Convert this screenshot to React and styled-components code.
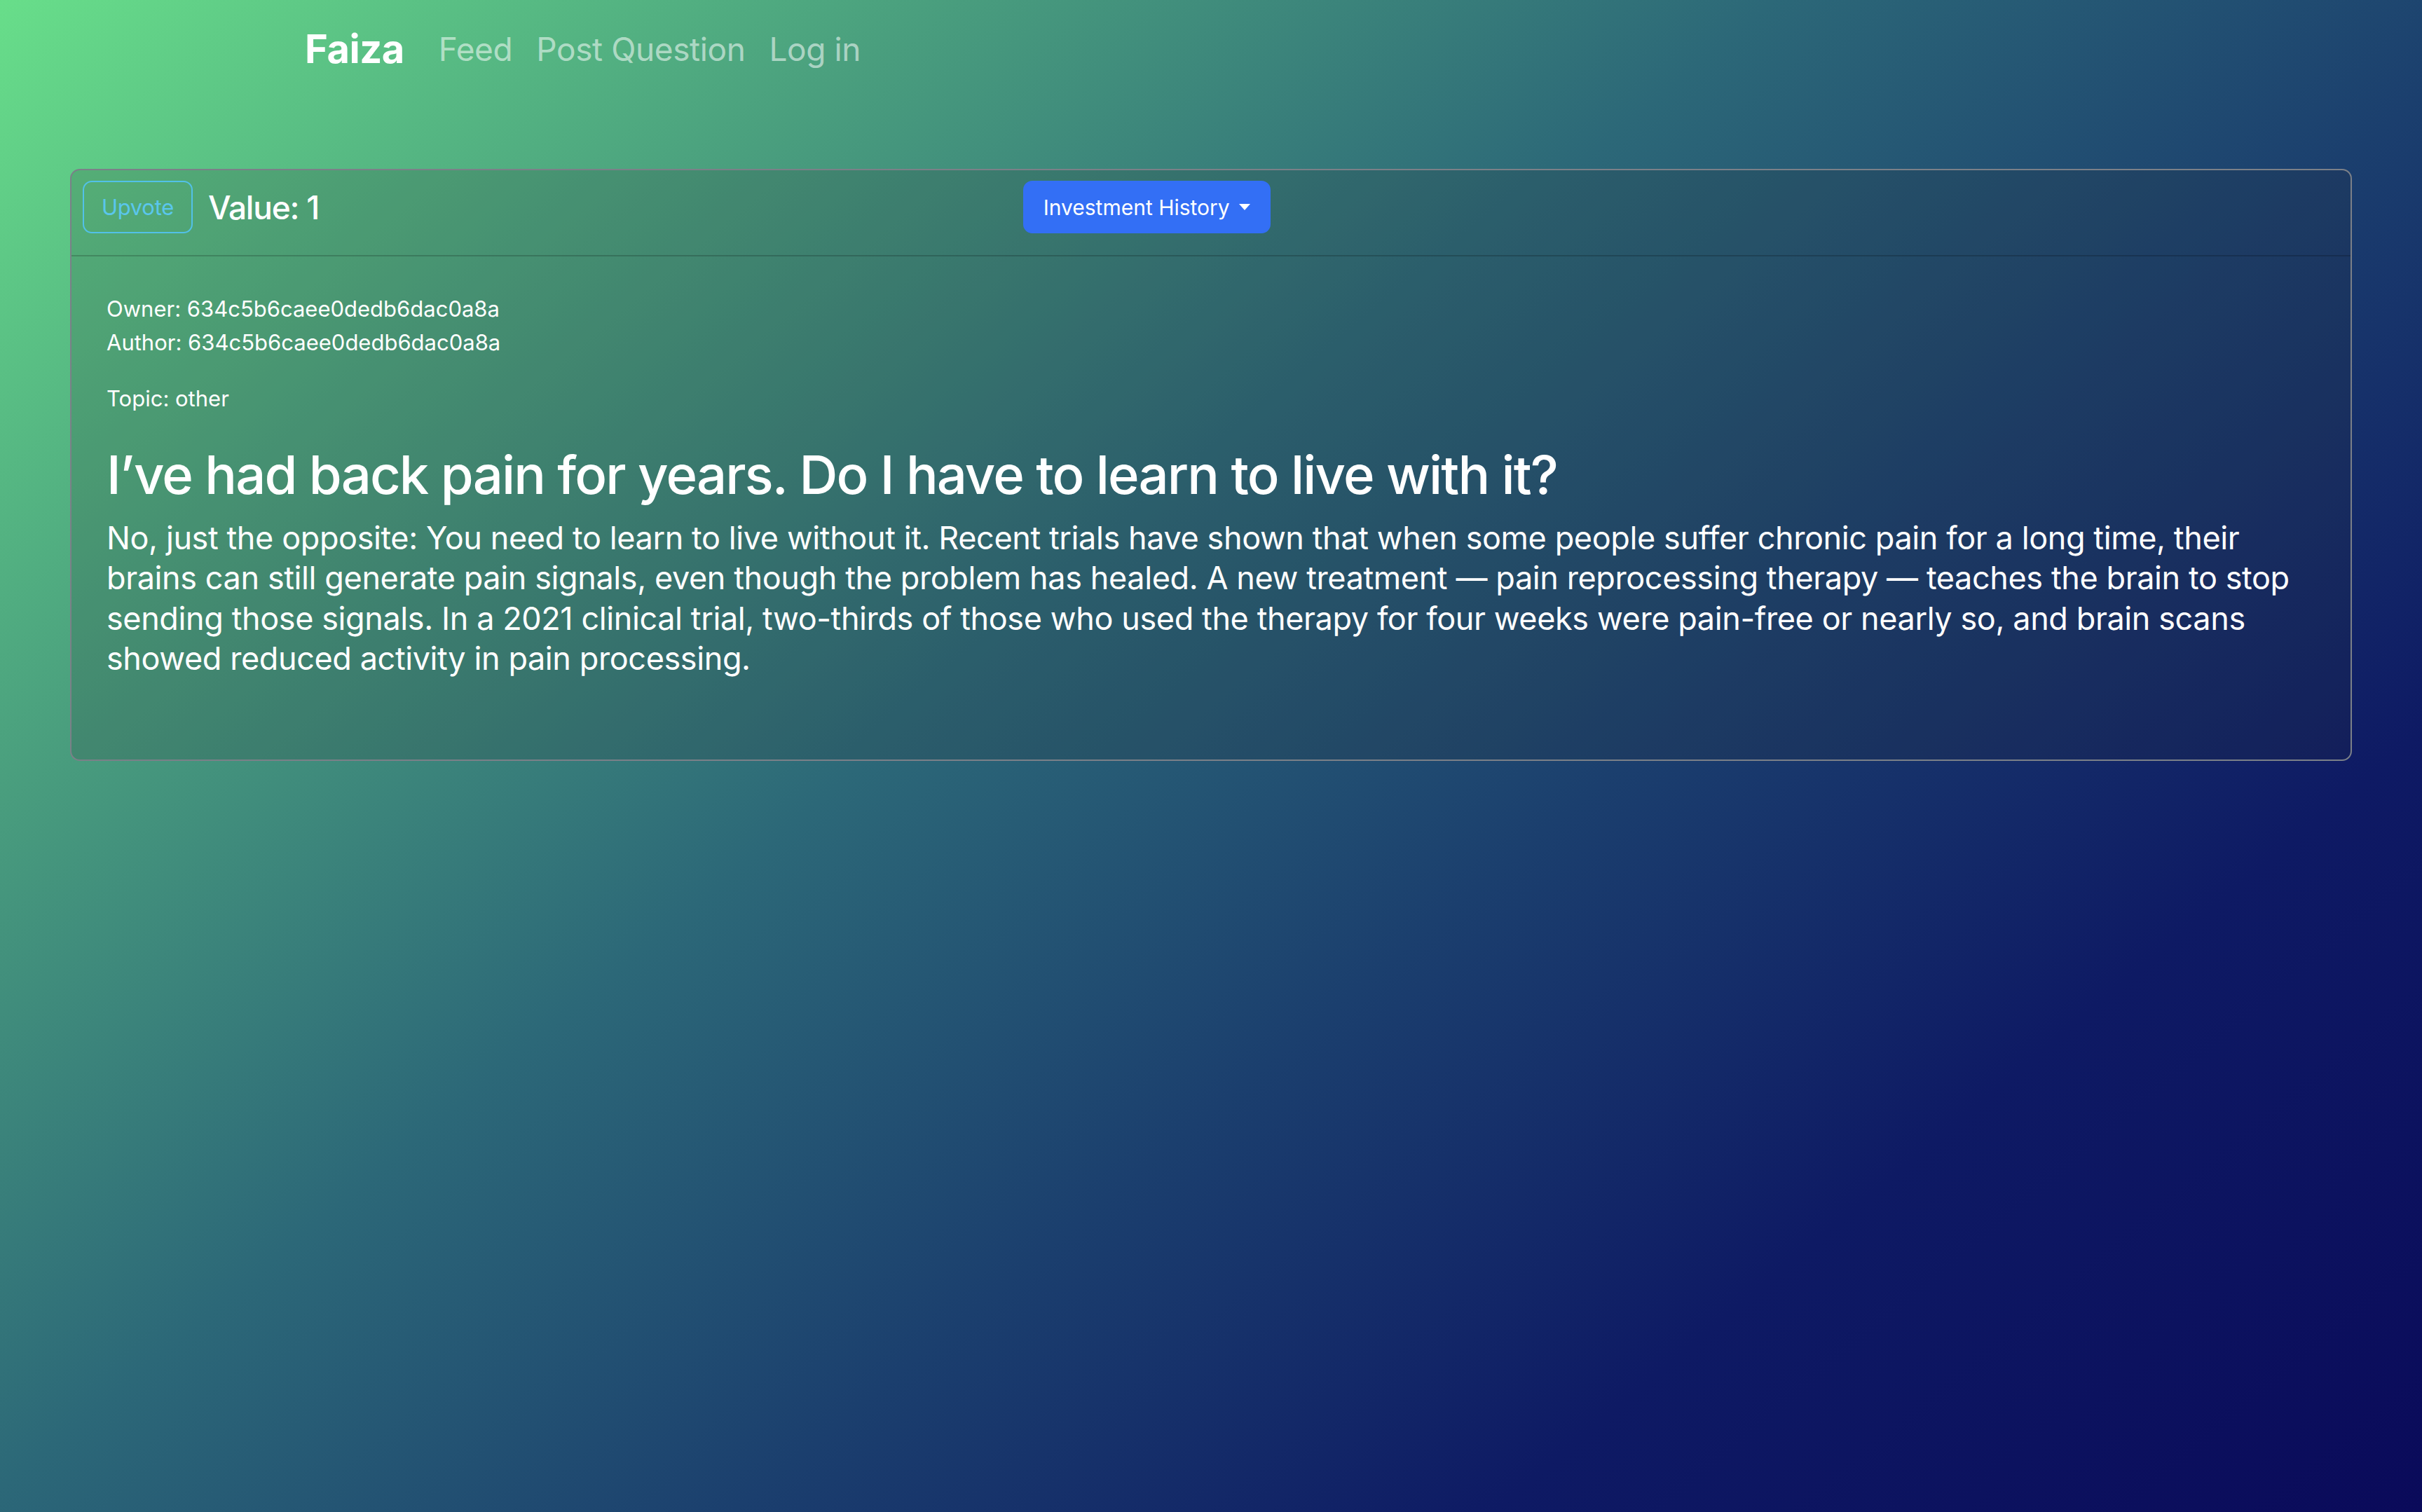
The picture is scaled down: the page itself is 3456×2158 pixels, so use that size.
import React from 'react'
import styled, { createGlobalStyle } from 'styled-components'

const GlobalStyle = createGlobalStyle`
  html, body {
    margin: 0;
    padding: 0;
  }
  body {
    font-family: Inter, "Noto Sans", sans-serif;
    color: #fff;
  }
  * {
    box-sizing: border-box;
  }
`

const Page = styled.div`
  min-height: 100vh;
  background: linear-gradient(140deg, #68de8a 0%, #4a9f7e 22%, #2c6878 42%, #1b3f6e 60%, #0e1a64 78%, #0a0a5a 100%);
`

const NavBar = styled.nav`
  display: flex;
  align-items: center;
  height: 140px;
  padding-left: 435px;
`

const Brand = styled.a`
  font-size: 56px;
  font-weight: 700;
  color: #fff;
  margin-right: 32px;
  letter-spacing: -0.5px;
`

const NavLink = styled.a`
  font-size: 46px;
  color: rgba(255, 255, 255, 0.55);
  padding: 0 17px;
  letter-spacing: -0.4px;
`

const Main = styled.main`
  padding: 101px 100px 0;
`

const Card = styled.section`
  border: 2px solid #7b8088;
  border-radius: 14px;
  background: rgba(40, 44, 52, 0.18);
  overflow: hidden;
`

const CardHeader = styled.header`
  display: grid;
  grid-template-columns: 5fr 7fr;
  align-items: center;
  padding: 15px 16px 31px;
  border-bottom: 2px solid rgba(0, 0, 0, 0.18);
`

const VoteGroup = styled.div`
  display: flex;
  align-items: center;
  gap: 22px;
`

const Button = styled.button`
  display: inline-flex;
  align-items: center;
  height: 75px;
  padding: 0 ${p => (p.$outline ? 25 : 27)}px;
  border-radius: 13px;
  font-family: inherit;
  font-size: ${p => (p.$outline ? 31 : 30)}px;
  letter-spacing: ${p => (p.$outline ? -0.3 : 0)}px;
  cursor: pointer;
  border: 2px solid ${p => (p.$outline ? '#52c1e8' : '#336ff5')};
  background: ${p => (p.$outline ? 'transparent' : '#336ff5')};
  color: ${p => (p.$outline ? '#5ac6ec' : '#fff')};
  justify-self: start;
`

const Caret = styled.span`
  display: inline-block;
  margin-left: 13px;
  border-top: 9px solid #fff;
  border-left: 8px solid transparent;
  border-right: 8px solid transparent;
`

const Value = styled.h4`
  margin: 0;
  font-size: 46px;
  font-weight: 500;
  letter-spacing: -1.2px;
`

const CardBody = styled.div`
  padding: 51px 42px 116px 50px;
`

const Meta = styled.p`
  margin: 0 0 ${p => p.$gap || 32}px;
  font-size: 31px;
  line-height: 48px;
`

const Question = styled.h1`
  margin: 0 0 14px;
  font-size: 76px;
  font-weight: 500;
  line-height: 96px;
  letter-spacing: -1.9px;
`

const Answer = styled.p`
  margin: 0;
  font-size: 45px;
  line-height: 57.3px;
  letter-spacing: -0.4px;
`

export default function App() {
  return (
    <Page>
      <GlobalStyle />
      <NavBar>
        <Brand>Faiza</Brand>
        <NavLink>Feed</NavLink>
        <NavLink>Post Question</NavLink>
        <NavLink>Log in</NavLink>
      </NavBar>
      <Main>
        <Card>
          <CardHeader>
            <VoteGroup>
              <Button $outline>Upvote</Button>
              <Value>Value: 1</Value>
            </VoteGroup>
            <Button>
              Investment History
              <Caret />
            </Button>
          </CardHeader>
          <CardBody>
            <Meta>
              Owner: 634c5b6caee0dedb6dac0a8a
              <br />
              Author: 634c5b6caee0dedb6dac0a8a
            </Meta>
            <Meta $gap={36}>Topic: other</Meta>
            <Question>I’ve had back pain for years. Do I have to learn to live with it?</Question>
            <Answer>
              No, just the opposite: You need to learn to live without it. Recent trials have shown that when
              some people suffer chronic pain for a long time, their brains can still generate pain signals, even
              though the problem has healed. A new treatment — pain reprocessing therapy — teaches the brain to
              stop sending those signals. In a 2021 clinical trial, two-thirds of those who used the therapy for
              four weeks were pain-free or nearly so, and brain scans showed reduced activity in pain processing.
            </Answer>
          </CardBody>
        </Card>
      </Main>
    </Page>
  )
}
